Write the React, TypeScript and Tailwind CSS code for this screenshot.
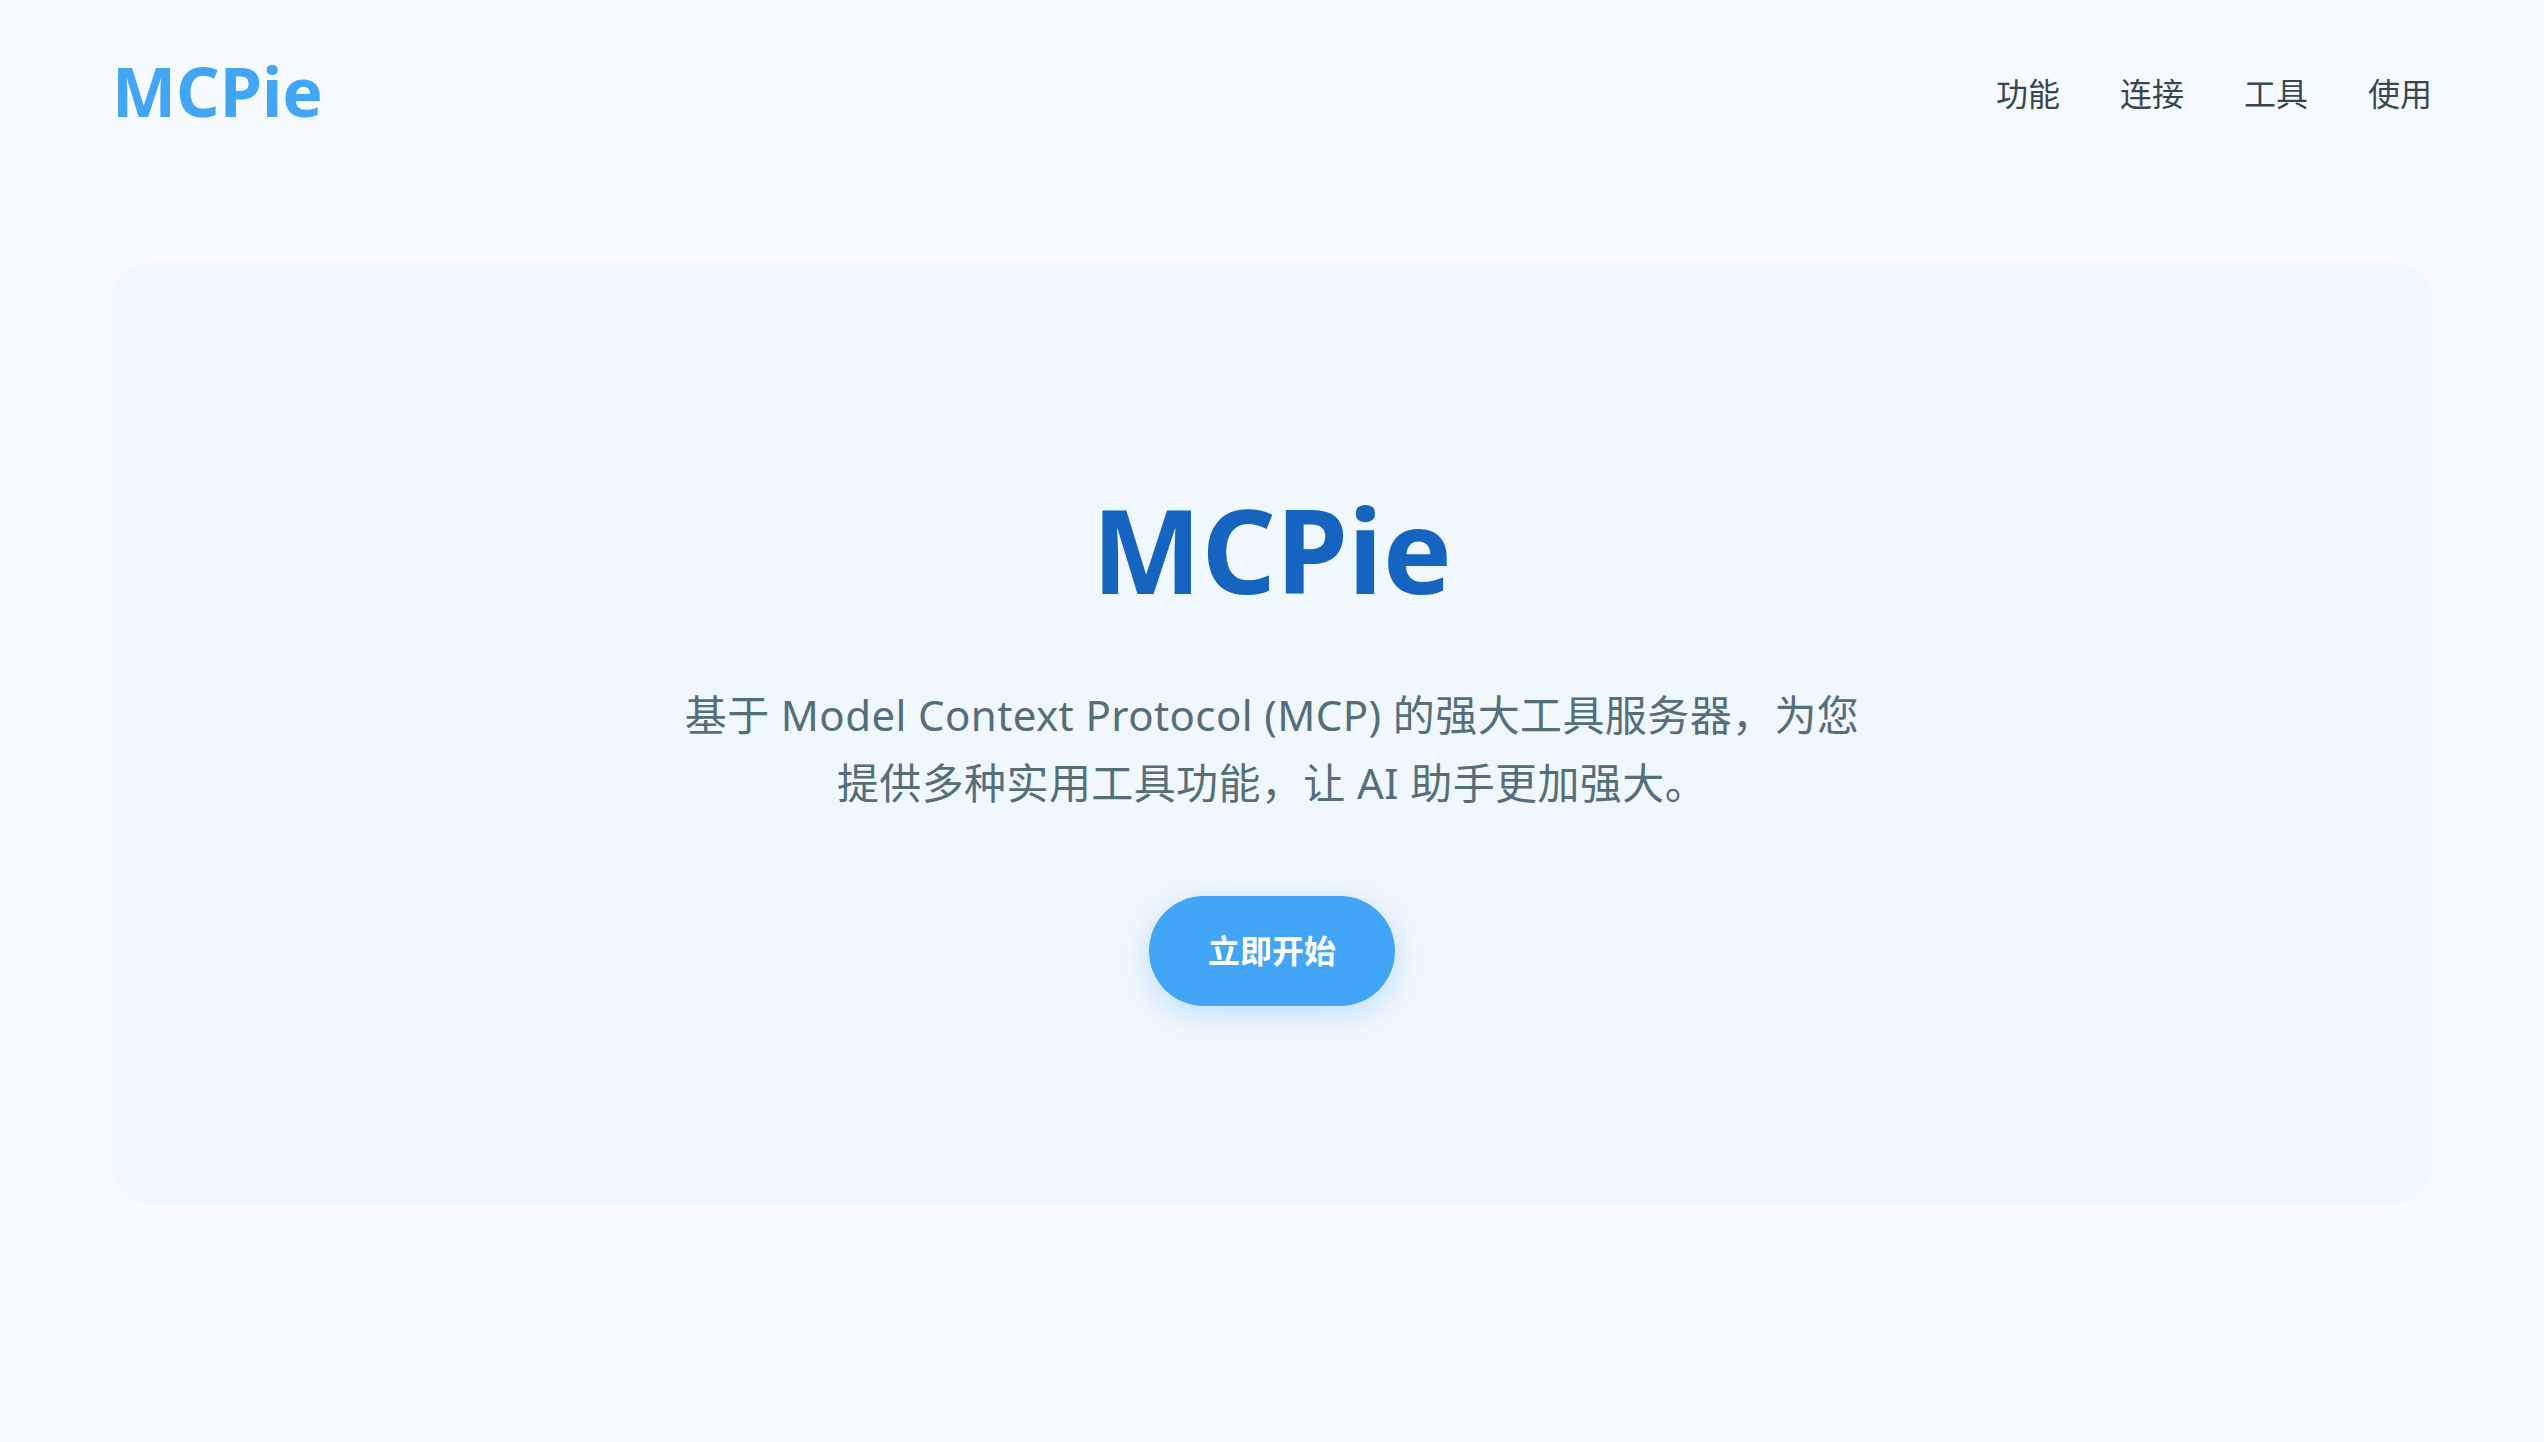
const navItems = ["功能", "连接", "工具", "使用"];

export default function App() {
  return (
    <div className="min-h-screen bg-[#f6fafe] font-['Noto_Sans','Noto_Sans_CJK_SC',sans-serif]">
      <header className="flex h-[182px] items-center justify-between px-[112px]">
        <a href="#" className="text-[68px] font-bold leading-none text-[#42a5f5]">
          MCPie
        </a>
        <nav className="flex items-center gap-[60px] pt-[6px]">
          {navItems.map((item) => (
            <a key={item} href="#" className="text-[32px] leading-none text-[#37474f]">
              {item}
            </a>
          ))}
        </nav>
      </header>

      <main className="px-[112px] pt-[80px] pb-[200px]">
        <section className="flex flex-col items-center rounded-[40px] bg-[#f1f7fe] pt-[215px] pb-[199px] text-center">
          <h1 className="text-[116px] font-bold leading-[144px] text-[#1565c0]">MCPie</h1>
          <p className="mt-[60px] text-[42px] leading-[68px] tracking-[0.4px] text-[#546e7a]">
            基于 Model Context Protocol (MCP) 的强大工具服务器，为您
            <br />
            提供多种实用工具功能，让 AI 助手更加强大。
          </p>
          <button className="mt-[79px] h-[110px] rounded-full bg-[#42a5f5] px-[59px] text-[32px] font-bold text-white shadow-[0_8px_28px_rgba(66,165,245,0.3)]">
            立即开始
          </button>
        </section>
      </main>
    </div>
  );
}
